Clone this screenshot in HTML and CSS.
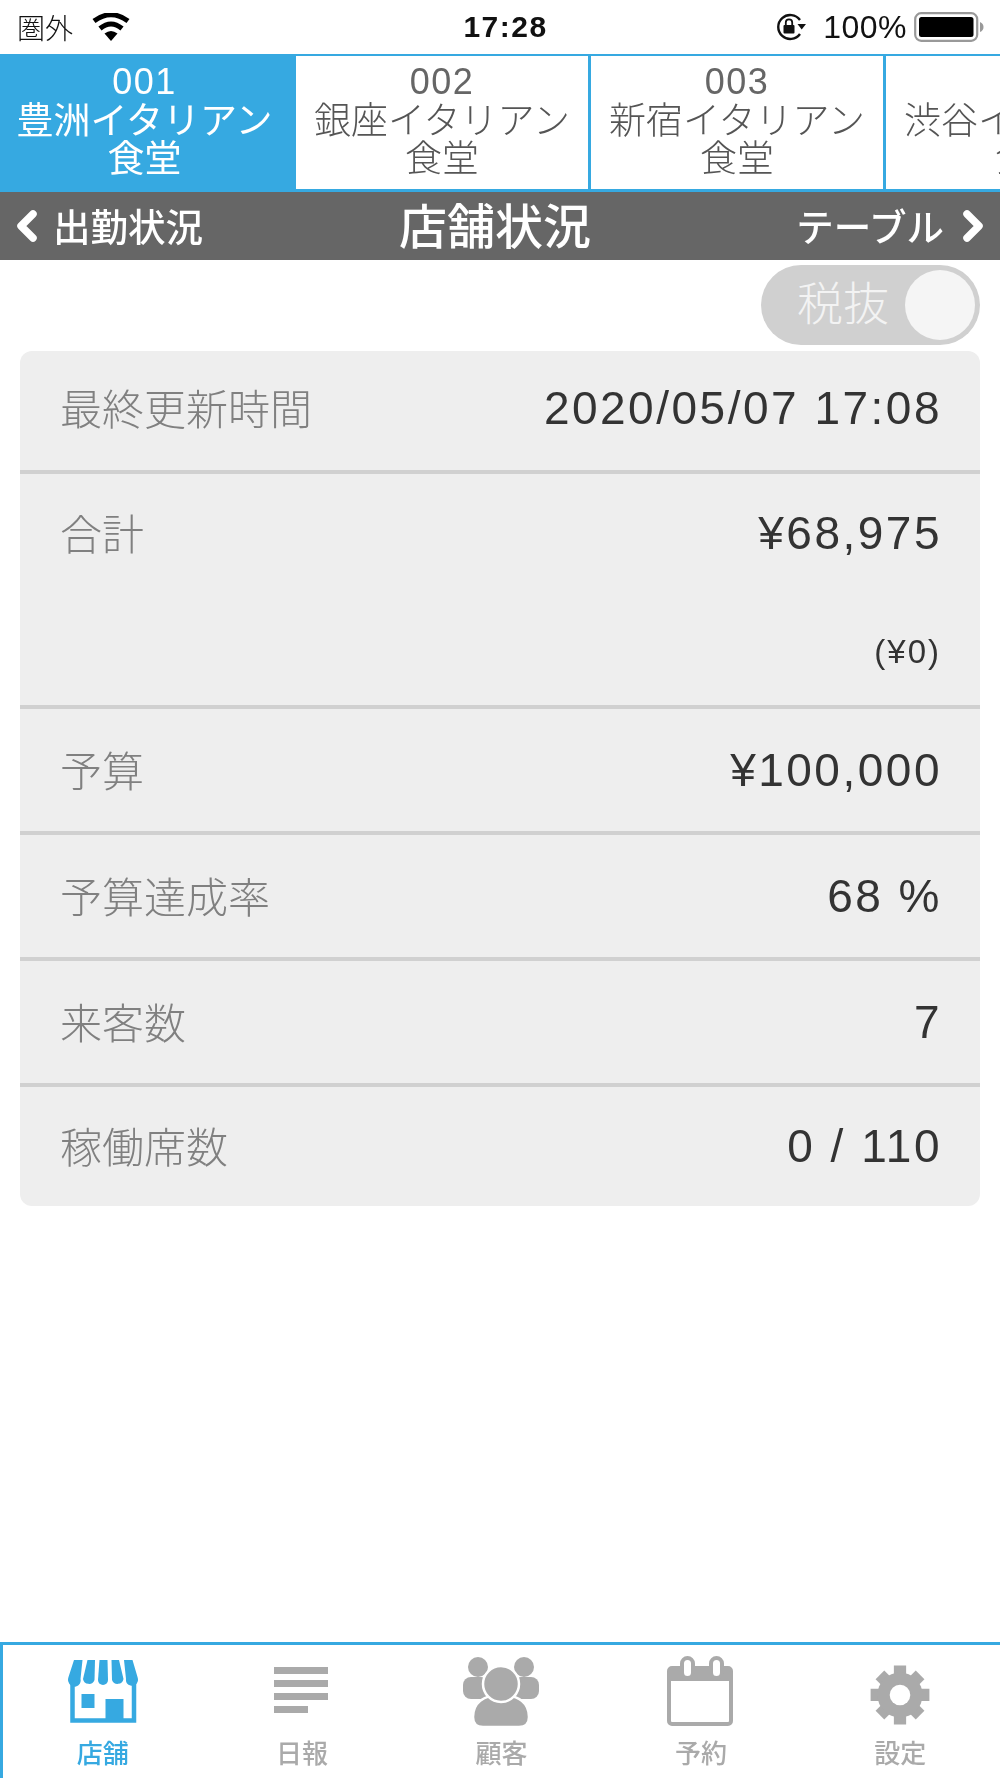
FILE: index.html
```html
<!DOCTYPE html>
<html lang="ja">
<head>
<meta charset="utf-8">
<title>店舗状況</title>
<link rel="stylesheet" href="styles.css">
</head>
<body>
<div class="app">
  <header class="status">
    <div class="status-left">
      <span class="carrier">圏外</span>
      <svg class="wifi" viewBox="0 0 38 28" width="38" height="28"><path d="M19 28 L12.5 20.5 Q19 15.5 25.500 20.5 Z" fill="#000"/><path d="M8 15.500 Q19 6.500 30 15.500" fill="none" stroke="#000" stroke-width="5"/><path d="M2 8 Q19 -4.500 36 8" fill="none" stroke="#000" stroke-width="5"/></svg>
    </div>
    <div class="clock">17:28</div>
    <div class="status-right">
      <svg class="lock" viewBox="0 0 32 28" width="32" height="28"><path d="M25 21 A12 12 0 1 1 25 7" fill="none" stroke="#111" stroke-width="2.400"/><path d="M22.500 11 L31 11 L26.700 16.500 Z" fill="#111"/><rect x="8.500" y="12" width="11" height="8.500" rx="1" fill="#111"/><path d="M10.800 12 V9.500 A3.200 3.200 0 0 1 17.200 9.500 V12" fill="none" stroke="#111" stroke-width="1.800"/></svg>
      <span class="battery-text">100%</span>
      <svg class="battery" viewBox="0 0 70 30" width="70" height="30"><rect x="1.200" y="1.200" width="62" height="27.600" rx="6" fill="none" stroke="#999" stroke-width="2.200"/><rect x="5" y="5" width="54.500" height="20" rx="2.500" fill="#000"/><path d="M66 10 Q69.500 11.500 69.500 15 Q69.500 18.500 66 20 Z" fill="#999"/></svg>
    </div>
  </header>

  <nav class="shops">
    <div class="shop shop-active"><div class="shop-no">001</div><div>豊洲イタリアン</div><div>食堂</div></div>
    <div class="shop"><div class="shop-no">002</div><div>銀座イタリアン</div><div>食堂</div></div>
    <div class="shop"><div class="shop-no">003</div><div>新宿イタリアン</div><div>食堂</div></div>
    <div class="shop"><div class="shop-no">004</div><div>渋谷イタリアン</div><div>食堂</div></div>
  </nav>

  <div class="titlebar">
    <div class="nav-side">
      <svg class="chev" viewBox="0 0 22 34" width="22" height="34"><path d="M17 5 L5 17 L17 29" fill="none" stroke="#fff" stroke-width="7.500" stroke-linejoin="round" stroke-linecap="round"/></svg>
      <span class="nav-text">出勤状況</span>
    </div>
    <h1 class="title">店舗状況</h1>
    <div class="nav-side nav-right">
      <span class="nav-text">テーブル</span>
      <svg class="chev" viewBox="0 0 22 34" width="22" height="34"><path d="M5 5 L17 17 L5 29" fill="none" stroke="#fff" stroke-width="7.500" stroke-linejoin="round" stroke-linecap="round"/></svg>
    </div>
  </div>

  <main class="content">
    <div class="toggle-row">
      <div class="toggle"><span class="toggle-label">税抜</span><span class="knob"></span></div>
    </div>
    <section class="card">
      <div class="row row-first"><span class="label">最終更新時間</span><span class="value">2020/05/07 17:08</span></div>
      <div class="row row-total">
        <span class="label">合計</span>
        <div class="value-stack"><span class="value">¥68,975</span><span class="subvalue">(¥0)</span></div>
      </div>
      <div class="row"><span class="label">予算</span><span class="value">¥100,000</span></div>
      <div class="row"><span class="label">予算達成率</span><span class="value">68 %</span></div>
      <div class="row"><span class="label">来客数</span><span class="value">7</span></div>
      <div class="row row-last"><span class="label">稼働席数</span><span class="value">0 / 110</span></div>
    </section>
  </main>

  <footer class="tabbar">
    <div class="tab tab-active">
      <svg viewBox="0 0 70 64" width="70" height="64" class="tab-icon">
        <path d="M4.500 18 V60.500 H66 V18" fill="none" stroke="#36a9e1" stroke-width="4.500"/>
        <rect x="13.500" y="34" width="13" height="14" fill="#36a9e1"/>
        <rect x="37.500" y="39" width="18" height="23" fill="#36a9e1"/>
        <g fill="#36a9e1">
          <path d="M6 0 H14.500 L12.500 19 A6 6 0 0 1 0.500 22 Q-0.500 20 0.500 17 Z"/>
          <path d="M19.500 0 H27 L26.500 20 A6 6 0 0 1 15 19 Z"/>
          <path d="M31.500 0 H39.500 L40 20 A5 5 0 0 1 30 20 Z"/>
          <path d="M43.500 0 H51 L55.500 19 A6 6 0 0 1 44 20 Z"/>
          <path d="M56 0 H64.500 L69.500 17 Q70.500 20 69.500 22 A6 6 0 0 1 58 19 Z"/>
        </g>
      </svg>
      <span class="tab-label">店舗</span>
    </div>
    <div class="tab">
      <svg viewBox="0 0 70 70" width="70" height="70" class="tab-icon tab-icon-lines" fill="#aaa"><rect x="8" y="8" width="54" height="7"/><rect x="8" y="21" width="54" height="7"/><rect x="8" y="34" width="54" height="7"/><rect x="8" y="47" width="34" height="7"/></svg>
      <span class="tab-label">日報</span>
    </div>
    <div class="tab">
      <svg viewBox="0 0 76 70" width="76" height="70" class="tab-icon">
        <g fill="#aaa">
          <circle cx="15" cy="10" r="10"/><circle cx="61" cy="10" r="10"/>
          <rect x="0" y="20" width="26" height="22" rx="8"/><rect x="50" y="20" width="26" height="22" rx="8"/>
        </g>
        <g fill="#aaa" stroke="#fff" stroke-width="2.500">
          <path d="M10 60 C10 46 20 38 38 38 C56 38 66 46 66 60 Q66 70 56 70 H20 Q10 70 10 60 Z"/>
          <circle cx="38" cy="27" r="18"/>
        </g>
      </svg>
      <span class="tab-label">顧客</span>
    </div>
    <div class="tab">
      <svg viewBox="0 0 66 70" width="66" height="70" class="tab-icon tab-icon-cal">
        <rect x="2" y="12" width="62" height="56" rx="3" fill="#fff" stroke="#aaa" stroke-width="4"/>
        <path d="M2 12 H64 V25 H2 Z" fill="#aaa"/>
        <rect x="15" y="2" width="11" height="20" rx="5.500" fill="#fff" stroke="#aaa" stroke-width="4"/>
        <rect x="44" y="2" width="11" height="20" rx="5.500" fill="#fff" stroke="#aaa" stroke-width="4"/>
      </svg>
      <span class="tab-label">予約</span>
    </div>
    <div class="tab">
      <svg viewBox="0 0 70 70" width="70" height="70" class="tab-icon tab-icon-gear">
        <g stroke="#aaa" stroke-width="12.500" stroke-linecap="butt">
          <path d="M35 5 V65"/><path d="M5 35 H65"/><path d="M14.500 14.500 L55.500 55.500"/><path d="M55.500 14.500 L14.500 55.500"/>
        </g>
        <circle cx="35" cy="35" r="23" fill="#aaa"/>
        <circle cx="35" cy="35" r="10.500" fill="#fff"/>
      </svg>
      <span class="tab-label">設定</span>
    </div>
  </footer>
</div>
</body>
</html>
```
FILE: styles.css
```css
* { box-sizing: border-box; }
html, body { margin: 0; padding: 0; background: #fff; }
body {
  font-family: "Liberation Sans", "Noto Sans CJK JP", sans-serif;
  color: #333;
}
.app {
  width: 1000px;
  height: 1778px;
  display: flex;
  flex-direction: column;
  overflow: hidden;
  filter: blur(0.5px);
}

/* status bar */
.status {
  height: 54px;
  flex: none;
  display: grid;
  grid-template-columns: 1fr auto 1fr;
  align-items: center;
  padding: 0 16px 0 17px;
  color: #111;
}
.status-left { display: flex; align-items: center; gap: 19px; }
.carrier { font-size: 28px; font-weight: 300; }
.clock { font-size: 30px; font-weight: 700; letter-spacing: 1.500px; margin-left: 10px; }
.status-right { display: flex; justify-content: flex-end; align-items: center; gap: 16px; }
.battery-text { font-size: 32px; letter-spacing: 0.500px; margin-right: -9px; }
.wifi, .lock, .battery { display: block; }

/* shop tabs */
.shops {
  flex: none;
  height: 138px;
  display: flex;
  overflow: hidden;
  border-top: 2px solid #36a9e1;
  border-bottom: 3px solid #36a9e1;
}
.shop {
  flex: none;
  width: 295px;
  border-right: 3px solid #36a9e1;
  padding-top: 7px;
  text-align: center;
  font-size: 37px;
  font-weight: 300;
  line-height: 38px;
  color: #555;
}
.shop-no { font-size: 36px; letter-spacing: 1.500px; margin-bottom: 3px; line-height: 37px; color: #666; }
.shop-active {
  width: 296px;
  padding-right: 4px;
  background: #36a9e1;
  color: #fff;
  font-weight: 400;
}
.shop-active .shop-no { color: #fff; }

/* title bar */
.titlebar {
  flex: none;
  height: 68px;
  background: #666;
  color: #fff;
  display: grid;
  grid-template-columns: 1fr auto 1fr;
  align-items: center;
  padding: 0 16px;
}
.nav-side {
  display: flex;
  align-items: center;
  gap: 15px;
  font-size: 37.500px;
  font-weight: 500;
}
.nav-text { margin-top: -4px; }
.nav-right { justify-content: flex-end; gap: 18px; }
.chev { display: block; }
.title { margin: 4px 0 0; padding-right: 10px; font-size: 48px; font-weight: 500; line-height: 1; }

/* content */
.content { flex: 1; min-height: 0; padding: 5px 20px 0; }
.toggle-row { display: flex; justify-content: flex-end; }
.toggle {
  width: 219px;
  height: 80px;
  border-radius: 40px;
  background: #d0d0d0;
  display: flex;
  align-items: center;
  justify-content: space-between;
  padding: 0 5px 0 36px;
}
.toggle-label { color: #f3f3f3; font-size: 46px; font-weight: 300; line-height: 70px; margin-bottom: 3px; }
.knob { width: 70px; height: 70px; border-radius: 50%; background: #f5f5f5; }

.card {
  margin-top: 6px;
  background: #eee;
  border-radius: 12px;
  overflow: hidden;
}
.row {
  display: flex;
  justify-content: space-between;
  align-items: flex-start;
  padding: 38px 40px 38px;
  border-bottom: 4px solid #d0d0d0;
  line-height: 46px;
}
.row-first { padding: 34px 40px 39px; }
.row-total { padding: 36px 40px 30px; }
.row-last { padding: 36px 40px 37px; border-bottom: 0; }
.label { font-size: 42px; font-weight: 300; color: #808080; padding-top: 3px; margin-bottom: -3px; }
.value { font-size: 46px; color: #333; letter-spacing: 2.500px; margin-right: -2px; }
.value-stack { display: flex; flex-direction: column; align-items: flex-end; }
.subvalue { font-size: 33px; letter-spacing: 2px; color: #333; margin-top: 73px; line-height: 46px; margin-right: -1px; }

/* bottom tabs */
.tabbar {
  flex: none;
  height: 136px;
  display: grid;
  grid-template-columns: repeat(5, 1fr);
  border-top: 3px solid #36a9e1;
  border-left: 3px solid #36a9e1;
}
.tab {
  display: flex;
  flex-direction: column;
  align-items: center;
  color: #aaa;
}
.tab-icon { display: block; height: 70px; margin-top: 12px; }
.tab-icon-lines { transform: translate(-1px, 2px); }
.tab-icon-cal { transform: translate(-1px, -1px); }
.tab-icon-gear { transform: translateY(3px) scale(0.98); }
.tab-active { color: #36a9e1; margin-top: 3px; }
.tab-active .tab-icon { height: 64px; margin-top: 12px; }
.tab-label { font-size: 26px; font-weight: 500; line-height: 34px; margin-top: 10px; }
.tab-active .tab-label { margin-top: 13px; }
```
